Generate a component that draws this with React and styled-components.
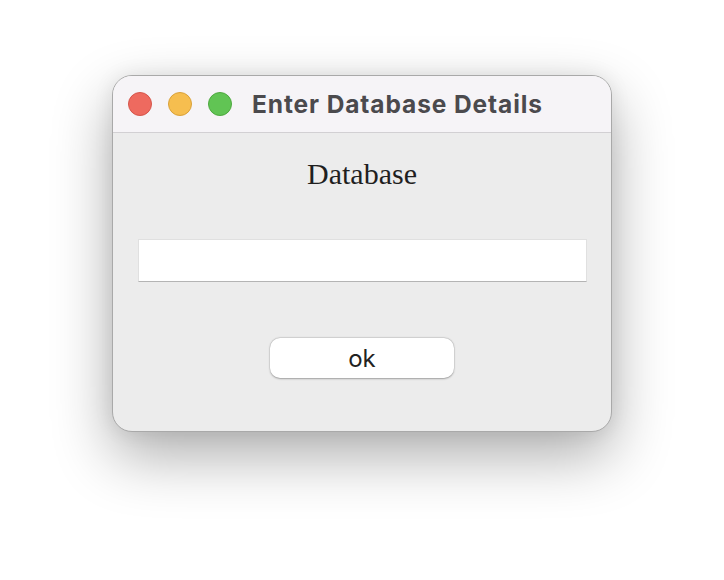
import React from "react";
import styled, { createGlobalStyle } from "styled-components";

const Global = createGlobalStyle`
  html, body { margin: 0; padding: 0; background: #ffffff; }
  body { width: 724px; height: 580px; overflow: hidden; }
`;

const Page = styled.div`
  display: flex;
  justify-content: center;
  padding-top: 75px;
  height: 580px;
  box-sizing: border-box;
`;

const Window = styled.div`
  width: 500px;
  height: 357px;
  box-sizing: border-box;
  border-radius: 20px;
  background: #ececec;
  border: 1px solid #a9a9a9;
  box-shadow: 0 24px 60px rgba(0, 0, 0, 0.32), 0 0 20px rgba(0, 0, 0, 0.08);
  display: flex;
  flex-direction: column;
  overflow: hidden;
`;

const TitleBar = styled.div`
  height: 56px;
  flex: none;
  background: #f6f4f7;
  border-bottom: 1px solid #d2d0d3;
  display: flex;
  align-items: center;
  padding-left: 15px;
`;

const Lights = styled.div`
  display: flex;
  gap: 16px;
  margin-right: 20px;
`;

const Light = styled.span`
  width: 24px;
  height: 24px;
  border-radius: 50%;
  box-sizing: border-box;
  background: ${(p) => p.$fill};
  border: 1px solid ${(p) => p.$edge};
`;

const Title = styled.div`
  font-family: Inter, "Liberation Sans", sans-serif;
  font-weight: 700;
  font-size: 24.5px;
  color: #4b4a4d;
  letter-spacing: 0.9px;
`;

const Body = styled.div`
  flex: 1;
  display: flex;
  flex-direction: column;
  align-items: center;
  padding: 0 25px;
`;

const Label = styled.div`
  font-family: "Liberation Serif", serif;
  font-size: 30px;
  color: #1f1f1f;
  margin-top: 25px;
  line-height: 32px;
`;

const Field = styled.input`
  display: block;
  width: 449px;
  height: 43px;
  box-sizing: border-box;
  margin-top: 49px;
  border: 1px solid #e0e0e0;
  border-bottom: 1px solid #b4b4b4;
  background: #ffffff;
  outline: none;
  padding: 0 8px;
  font-size: 20px;
`;

const Button = styled.button`
  margin-top: 56px;
  width: 184px;
  height: 40px;
  border-radius: 10px;
  border: none;
  background: #ffffff;
  box-shadow: 0 0.5px 2px rgba(0, 0, 0, 0.3), 0 0 0 0.5px rgba(0, 0, 0, 0.08);
  font-family: Inter, "Liberation Sans", sans-serif;
  font-size: 24px;
  color: #222222;
  padding: 0;
  cursor: pointer;
`;

export default function App() {
  return (
    <>
      <Global />
      <Page>
        <Window>
          <TitleBar>
            <Lights>
              <Light $fill="#ee6a5f" $edge="#d5554b" />
              <Light $fill="#f6be4f" $edge="#d9a13a" />
              <Light $fill="#61c454" $edge="#4ea83f" />
            </Lights>
            <Title>Enter Database Details</Title>
          </TitleBar>
          <Body>
            <Label>Database</Label>
            <Field type="text" />
            <Button>ok</Button>
          </Body>
        </Window>
      </Page>
    </>
  );
}
